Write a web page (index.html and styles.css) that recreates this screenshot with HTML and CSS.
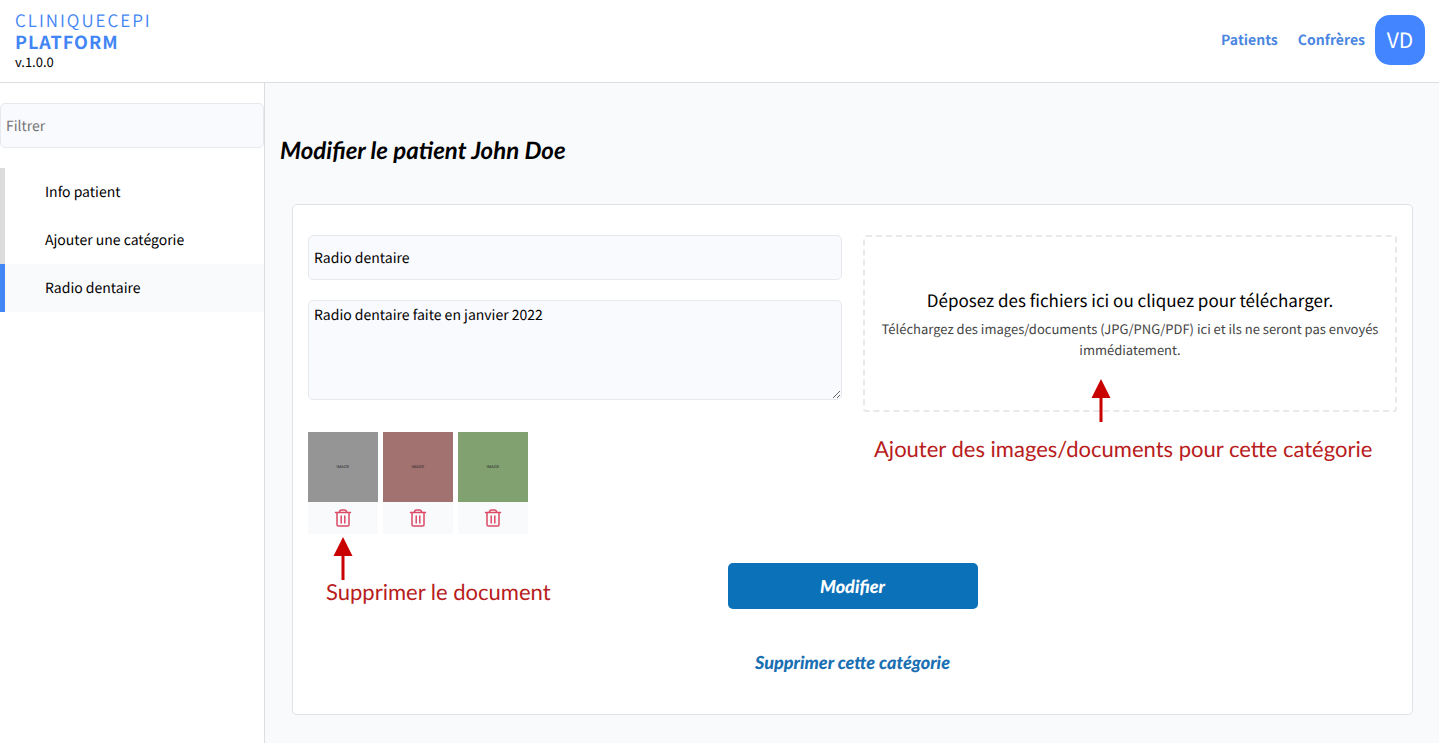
FILE: index.html
```html
<!DOCTYPE html>
<html lang="fr">
<head>
<meta charset="utf-8">
<meta name="viewport" content="width=device-width, initial-scale=1">
<title>Cliniquecepi Platform</title>
<link rel="stylesheet" href="styles.css">
</head>
<body>
<svg class="sprite" aria-hidden="true">
  <symbol id="trash" viewBox="0 0 18 18">
    <path d="M1.500 3.500h15M5.200 3.500C5.500 1.900 6.300 1 7.500 1h3C11.700 1 12.500 1.900 12.800 3.500M3 3.500v12.200q0 1.300 1.300 1.300h9.400q1.300 0 1.300-1.300V3.500M7.200 7v7M10.800 7v7" fill="none" stroke="currentColor" stroke-width="1.500" stroke-linecap="round"/>
  </symbol>
  <symbol id="arrow" viewBox="0 0 20 44">
    <path d="M10 0L19.500 19H11.500V43h-3V19H.5z" fill="currentColor"/>
  </symbol>
</svg>
<header class="topbar">
  <div class="brand">
    <span class="brand-name">CLINIQUECEPI</span>
    <span class="brand-sub">PLATFORM</span>
    <span class="brand-version">v.1.0.0</span>
  </div>
  <nav class="topnav">
    <a href="#patients">Patients</a>
    <a href="#confreres">Confrères</a>
    <button class="avatar" type="button">VD</button>
  </nav>
</header>
<div class="layout">
  <aside class="sidebar">
    <input class="field" type="text" placeholder="Filtrer" aria-label="Filtrer">
    <nav class="menu">
      <a href="#info">Info patient</a>
      <a href="#ajouter">Ajouter une catégorie</a>
      <a class="active" href="#radio">Radio dentaire</a>
    </nav>
  </aside>
  <main class="content">
    <h1>Modifier le patient John Doe</h1>
    <form class="card">
      <div class="columns">
        <div class="fields">
          <input class="field" type="text" value="Radio dentaire" aria-label="Nom de la catégorie">
          <textarea class="field area" aria-label="Description">Radio dentaire faite en janvier 2022</textarea>
        </div>
        <div class="upload">
          <button class="dropzone" type="button">
            <span class="drop-title">Déposez des fichiers ici ou cliquez pour télécharger.</span>
            <span class="drop-hint">Téléchargez des images/documents (JPG/PNG/PDF) ici et ils ne seront pas envoyés immédiatement.</span>
          </button>
          <div class="note note-add">
            <svg class="arrow"><use href="#arrow"/></svg>
            <span>Ajouter des images/documents pour cette catégorie</span>
          </div>
        </div>
      </div>
      <div class="documents">
        <div class="document">
          <div class="thumb gray">IMAGE</div>
          <button class="remove" type="button" aria-label="Supprimer le document 1"><svg><use href="#trash"/></svg></button>
        </div>
        <div class="document">
          <div class="thumb red">IMAGE</div>
          <button class="remove" type="button" aria-label="Supprimer le document 2"><svg><use href="#trash"/></svg></button>
        </div>
        <div class="document">
          <div class="thumb green">IMAGE</div>
          <button class="remove" type="button" aria-label="Supprimer le document 3"><svg><use href="#trash"/></svg></button>
        </div>
        <div class="note note-remove">
          <svg class="arrow"><use href="#arrow"/></svg>
          <span>Supprimer le document</span>
        </div>
      </div>
      <div class="actions">
        <button class="submit" type="submit">Modifier</button>
        <button class="delete" type="button">Supprimer cette catégorie</button>
      </div>
    </form>
  </main>
</div>
</body>
</html>
```
FILE: styles.css
```css
* { box-sizing: border-box; }

body {
  margin: 0;
  min-height: 100vh;
  display: flex;
  flex-direction: column;
  background: #fff;
  color: #000;
  font: 14px/24px "Source Sans Pro", "Noto Sans CJK JP", sans-serif;
  text-rendering: geometricPrecision;
}

a { text-decoration: none; color: inherit; }
button { font: inherit; border: 0; padding: 0; cursor: pointer; text-rendering: inherit; }
.sprite { position: absolute; width: 0; height: 0; }

.topbar {
  display: flex;
  justify-content: space-between;
  align-items: flex-start;
  padding: 9px 14px 11px 15px;
  border-bottom: 1px solid #dcdee2;
}
.brand { display: flex; flex-direction: column; color: #4285f4; }
.brand-name { font-size: 17px; line-height: 22px; font-weight: 350; letter-spacing: 2px; }
.brand-sub { font-size: 18px; line-height: 22px; font-weight: 700; letter-spacing: 1px; }
.brand-version { font-size: 13px; line-height: 18px; color: #000; }

.topnav { display: flex; align-items: center; padding-top: 6px; color: #4a86e0; font-weight: 600; }
.topnav a { margin-right: 20px; }
.topnav a:last-of-type { margin-right: 10px; }
.avatar {
  width: 50px;
  height: 50px;
  border-radius: 15px;
  background: #4285ff;
  color: #fff;
  font-size: 21px;
  font-weight: 400;
}

.layout { flex: 1; display: flex; }
.sidebar { width: 265px; flex: none; padding-top: 20px; border-right: 1px solid #dcdee2; }
.field {
  display: block;
  width: 100%;
  height: 45px;
  padding: 0 5px;
  border: 1px solid #e6e9ee;
  border-radius: 5px;
  background: #f9fafe;
  color: #000;
  font: inherit;
  text-rendering: inherit;
}
.field::placeholder { color: #757575; }
.menu { display: flex; flex-direction: column; margin-top: 20px; }
.menu a { padding: 12px 40px; border-left: 5px solid #dcdcdc; }
.menu .active { background: #f9fafc; border-color: #4285f4; }

.content { flex: 1; min-width: 0; padding: 50px 15px 28px; background: #f9fafc; }
h1 { margin: 0; font: italic 700 24px/36px Lato, sans-serif; }

.card {
  margin: 35px 11px 0 12px;
  padding: 30px 15px 29px;
  border: 1px solid #e0e2e5;
  border-radius: 5px;
  background: #fff;
}
.columns { display: grid; grid-template-columns: 1fr 1fr; gap: 21px; }
.fields { display: flex; flex-direction: column; gap: 20px; }
.area { height: 100px; padding: 2px 5px; resize: vertical; }

.upload { position: relative; }
.dropzone {
  width: 100%;
  height: 177px;
  padding: 0 15px 4px;
  border: 2px dashed #e9e9ed;
  border-radius: 3px;
  background: #fff;
  color: #000;
}
.drop-title { display: block; margin-bottom: 2px; font-size: 17px; line-height: 32px; }
.drop-hint { display: block; font-size: 13px; line-height: 21px; color: #444; }

.note {
  position: absolute;
  display: flex;
  flex-direction: column;
  color: #c80000;
  font: 400 22px/26px Lato, sans-serif;
  white-space: nowrap;
  pointer-events: none;
}
.note span { color: #b81c1c; }
.arrow { width: 20px; height: 44px; }
.note-add { top: 144px; left: 11px; gap: 13px; }
.note-add .arrow { margin-left: 217px; }
.note-remove { top: 105px; left: 18px; }
.note-remove .arrow { height: 44px; margin: 0 0 -2px 7px; }

.documents { position: relative; display: flex; gap: 5px; margin-top: 20px; }
.document { width: 70px; background: #f9fafc; }
.thumb {
  height: 70px;
  text-align: center;
  font: 4px/70px "Liberation Sans", sans-serif;
  color: #222;
}
.gray { background: #959595; }
.red { background: #a27271; }
.green { background: #82a171; }
.remove {
  display: flex;
  align-items: center;
  justify-content: center;
  width: 100%;
  height: 32px;
  background: none;
  color: #dc4a66;
}
.remove svg { width: 18px; height: 18px; }

.actions { display: flex; flex-direction: column; align-items: center; gap: 30px; margin-top: 29px; }
.actions button { font: italic 900 18px/46px Lato, sans-serif; }
.submit { width: 250px; border-radius: 5px; background: #0b71b8; color: #fff; }
.actions .delete { background: none; color: #1a6fb3; }
```
